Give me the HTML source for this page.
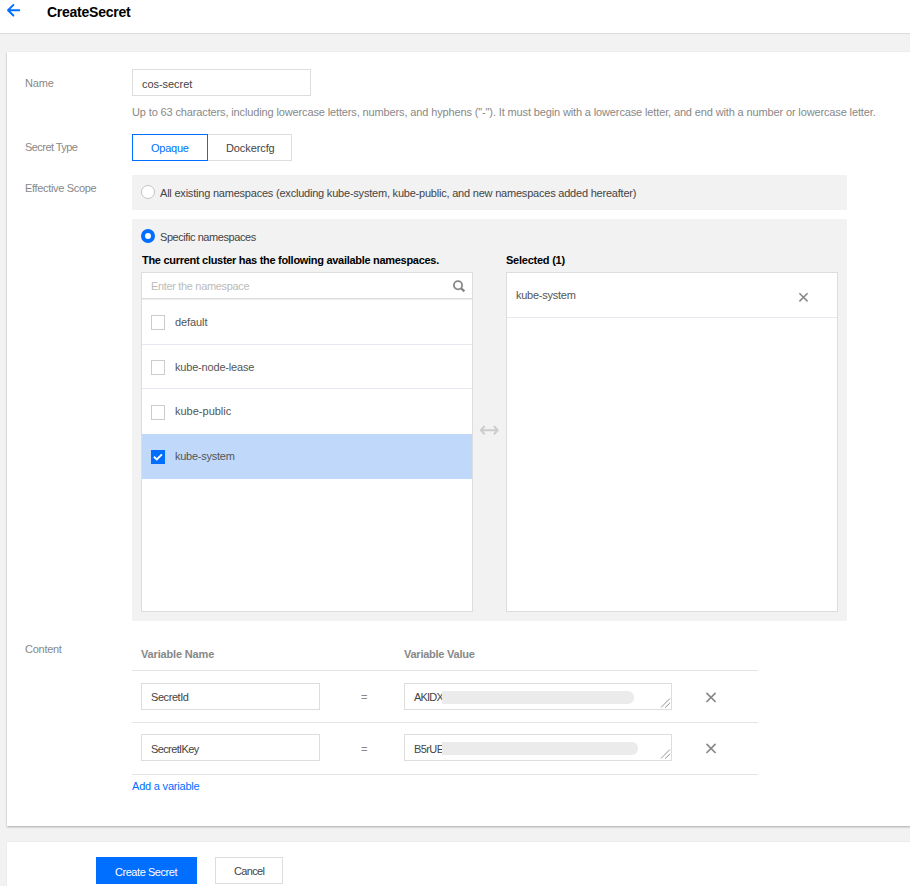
<!DOCTYPE html>
<html><head><meta charset="utf-8">
<style>
*{box-sizing:border-box;margin:0;padding:0}
html,body{width:910px;height:886px;overflow:hidden;background:#f2f2f2;font-family:"Liberation Sans",sans-serif;color:#333}
.a{position:absolute}
.t{position:absolute;white-space:nowrap;line-height:1;font-size:11px}
</style></head><body>
<div class="a" style="left:0px;top:0px;width:910px;height:34px;background:#fff;border-bottom:1px solid #dcdcdc"></div>
<svg class="a" style="left:0px;top:0px" width="24" height="22" viewBox="0 0 24 22"><path d="M13.4 4.9 L8 10.2 L13.4 15.5 M8 10.2 H19.3" fill="none" stroke="#006eff" stroke-width="1.9" stroke-linecap="round" stroke-linejoin="round"/></svg>
<div class="t" style="left:47px;top:5px;font-size:14px;letter-spacing:-0.255px;color:#000;font-weight:bold;">CreateSecret</div>
<div class="a" style="left:7px;top:52px;width:910px;height:774px;background:#fff;box-shadow:0 1px 2px rgba(0,0,0,.3)"></div>
<div class="t" style="left:25px;top:78px;font-size:11px;letter-spacing:-0.167px;color:#888;">Name</div>
<div class="a" style="left:132px;top:69px;width:179px;height:27px;background:#fff;border:1px solid #ddd"></div>
<div class="t" style="left:142px;top:79px;font-size:11px;letter-spacing:-0.05px;color:#444;">cos-secret</div>
<div class="t" style="left:132px;top:107px;font-size:11px;letter-spacing:-0.133px;color:#888;">Up to 63 characters, including lowercase letters, numbers, and hyphens ("-"). It must begin with a lowercase letter, and end with a number or lowercase letter.</div>
<div class="t" style="left:25px;top:142px;font-size:11px;letter-spacing:-0.56px;color:#888;">Secret Type</div>
<div class="a" style="left:207px;top:134px;width:85px;height:27px;background:#fff;border:1px solid #ddd"></div>
<div class="a" style="left:132px;top:134px;width:76px;height:27px;background:#fff;border:1px solid #006eff"></div>
<div class="t" style="left:151px;top:143px;font-size:11px;letter-spacing:-0.24px;color:#006eff;">Opaque</div>
<div class="t" style="left:226px;top:143px;font-size:11px;letter-spacing:-0.1px;color:#444;">Dockercfg</div>
<div class="t" style="left:25px;top:183px;font-size:11px;letter-spacing:-0.329px;color:#888;">Effective Scope</div>
<div class="a" style="left:132px;top:175px;width:715px;height:35px;background:#f2f2f2"></div>
<div class="a" style="left:141px;top:185px;width:14px;height:14px;border-radius:50%;border:1px solid #c4c4c4;background:#fff"></div>
<div class="t" style="left:160px;top:188px;font-size:11px;letter-spacing:-0.211px;color:#444;">All existing namespaces (excluding kube-system, kube-public, and new namespaces added hereafter)</div>
<div class="a" style="left:132px;top:219px;width:715px;height:402px;background:#f2f2f2"></div>
<div class="a" style="left:141px;top:229px;width:14px;height:14px;border-radius:50%;border:4px solid #006eff;background:#fff"></div>
<div class="t" style="left:160px;top:232px;font-size:11px;letter-spacing:-0.433px;color:#444;">Specific namespaces</div>
<div class="t" style="left:142px;top:255px;font-size:11px;letter-spacing:-0.293px;color:#000;font-weight:bold;">The current cluster has the following available namespaces.</div>
<div class="t" style="left:506px;top:255px;font-size:11px;letter-spacing:-0.236px;color:#000;font-weight:bold;">Selected (1)</div>
<div class="a" style="left:141px;top:272px;width:332px;height:340px;background:#fff;border:1px solid #ddd"></div>
<div class="t" style="left:151px;top:281px;font-size:11px;letter-spacing:-0.333px;color:#bbb;">Enter the namespace</div>
<svg class="a" style="left:452px;top:279px" width="14" height="14" viewBox="0 0 14 14"><circle cx="6" cy="6.3" r="4.1" fill="none" stroke="#888" stroke-width="1.8"/><path d="M8.9 9.2 L12.4 12.4" stroke="#888" stroke-width="2.4"/></svg>
<div class="a" style="left:142px;top:298px;width:330px;height:1px;background:#ddd"></div>
<div class="a" style="left:142px;top:299px;width:330px;height:1px;background:#eee"></div>
<div class="a" style="left:151px;top:315px;width:14px;height:15px;border:1px solid #ccc;background:#fff"></div>
<div class="t" style="left:175px;top:317px;font-size:11px;letter-spacing:-0.083px;color:#555;">default</div>
<div class="a" style="left:151px;top:360px;width:14px;height:15px;border:1px solid #ccc;background:#fff"></div>
<div class="t" style="left:175px;top:362px;font-size:11px;letter-spacing:-0.186px;color:#555;">kube-node-lease</div>
<div class="a" style="left:151px;top:405px;width:14px;height:15px;border:1px solid #ccc;background:#fff"></div>
<div class="t" style="left:175px;top:406px;font-size:11px;letter-spacing:0px;color:#555;">kube-public</div>
<div class="a" style="left:142px;top:434px;width:330px;height:45px;background:#c0d9fb"></div>
<div class="a" style="left:151px;top:450px;width:14px;height:14px;background:#006eff"></div>
<svg class="a" style="left:151px;top:450px" width="14" height="14" viewBox="0 0 14 14"><path d="M2.9 6.7 L5.8 9.4 L10.9 4.3" fill="none" stroke="#fff" stroke-width="1.9"/></svg>
<div class="t" style="left:175px;top:451px;font-size:11px;letter-spacing:-0.25px;color:#555;">kube-system</div>
<div class="a" style="left:142px;top:344px;width:330px;height:1px;background:#e5e8ee"></div>
<div class="a" style="left:142px;top:388px;width:330px;height:1px;background:#e5e8ee"></div>
<svg class="a" style="left:479px;top:424px" width="21" height="12" viewBox="0 0 21 12"><path d="M5.6 2 L1.9 6.2 L5.6 10.4 M14.9 2 L18.6 6.2 L14.9 10.4 M1.9 6.2 H18.6" fill="none" stroke="#ccc" stroke-width="2"/></svg>
<div class="a" style="left:506px;top:272px;width:332px;height:340px;background:#fff;border:1px solid #ddd"></div>
<div class="t" style="left:516px;top:290px;font-size:11px;letter-spacing:-0.25px;color:#555;">kube-system</div>
<svg class="a" style="left:797px;top:291px" width="14" height="14" viewBox="0 0 14 14"><path d="M2.9 2.7 L10.1 9.9 M10.1 2.7 L2.9 9.9" stroke="#888" stroke-width="1.6" stroke-linecap="round"/></svg>
<div class="a" style="left:507px;top:317px;width:330px;height:1px;background:#e5e8ee"></div>
<div class="t" style="left:25px;top:644px;font-size:11px;letter-spacing:-0.267px;color:#888;">Content</div>
<div class="t" style="left:141px;top:649px;font-size:11px;letter-spacing:-0.158px;color:#888;font-weight:bold;">Variable Name</div>
<div class="t" style="left:404px;top:649px;font-size:11px;letter-spacing:-0.246px;color:#888;font-weight:bold;">Variable Value</div>
<div class="a" style="left:132px;top:670px;width:626px;height:1px;background:#e5e5e5"></div>
<div class="a" style="left:141px;top:683px;width:179px;height:27px;background:#fff;border:1px solid #ddd"></div>
<div class="t" style="left:151px;top:692px;font-size:11px;letter-spacing:-0.429px;color:#444;">SecretId</div>
<div class="t" style="left:361px;top:692px;font-size:11px;letter-spacing:0px;color:#888;">=</div>
<div class="a" style="left:404px;top:683px;width:268px;height:27px;background:#fff;border:1px solid #ddd"></div>
<div class="t" style="left:414px;top:692px;font-size:11px;letter-spacing:-0.8px;color:#444;">AKIDX</div>
<div class="a" style="left:442px;top:691px;width:192px;height:13px;border-radius:0 6px 6px 0;background:#ebebeb;filter:blur(0.4px)"></div>
<svg class="a" style="left:656px;top:695px" width="16" height="16" viewBox="0 0 16 16"><path d="M5.1 12.4 L13.9 3.5 M9 12.7 L13.9 8" stroke="#888" stroke-width="0.9"/></svg>
<svg class="a" style="left:705px;top:692px" width="14" height="14" viewBox="0 0 14 14"><path d="M1.95 1.35 L10.1 9.5 M10.1 1.35 L1.95 9.5" stroke="#888" stroke-width="1.7" stroke-linecap="round"/></svg>
<div class="a" style="left:132px;top:722px;width:626px;height:1px;background:#e5e5e5"></div>
<div class="a" style="left:141px;top:734px;width:179px;height:27px;background:#fff;border:1px solid #ddd"></div>
<div class="t" style="left:151px;top:744px;font-size:11px;letter-spacing:-0.622px;color:#444;">SecretIKey</div>
<div class="t" style="left:361px;top:744px;font-size:11px;letter-spacing:0px;color:#888;">=</div>
<div class="a" style="left:404px;top:734px;width:268px;height:27px;background:#fff;border:1px solid #ddd"></div>
<div class="t" style="left:414px;top:744px;font-size:11px;letter-spacing:-0.6px;color:#444;">B5rUE</div>
<div class="a" style="left:442px;top:742px;width:196px;height:13px;border-radius:0 6px 6px 0;background:#ebebeb;filter:blur(0.4px)"></div>
<svg class="a" style="left:656px;top:746px" width="16" height="16" viewBox="0 0 16 16"><path d="M5.1 12.4 L13.9 3.5 M9 12.7 L13.9 8" stroke="#888" stroke-width="0.9"/></svg>
<svg class="a" style="left:705px;top:743px" width="14" height="14" viewBox="0 0 14 14"><path d="M1.95 1.35 L10.1 9.5 M10.1 1.35 L1.95 9.5" stroke="#888" stroke-width="1.7" stroke-linecap="round"/></svg>
<div class="a" style="left:132px;top:774px;width:626px;height:1px;background:#e5e5e5"></div>
<div class="t" style="left:132px;top:781px;font-size:11px;letter-spacing:-0.2px;color:#006eff;">Add a variable</div>
<div class="a" style="left:7px;top:842px;width:910px;height:60px;background:#fff;box-shadow:0 0 1px rgba(0,0,0,.15)"></div>
<div class="a" style="left:96px;top:857px;width:101px;height:27px;background:#006eff"></div>
<div class="t" style="left:115px;top:867px;font-size:11px;letter-spacing:-0.45px;color:#fff;">Create Secret</div>
<div class="a" style="left:215px;top:857px;width:68px;height:27px;background:#fff;border:1px solid #ddd"></div>
<div class="t" style="left:234px;top:866px;font-size:11px;letter-spacing:-0.64px;color:#444;">Cancel</div>
</body></html>
